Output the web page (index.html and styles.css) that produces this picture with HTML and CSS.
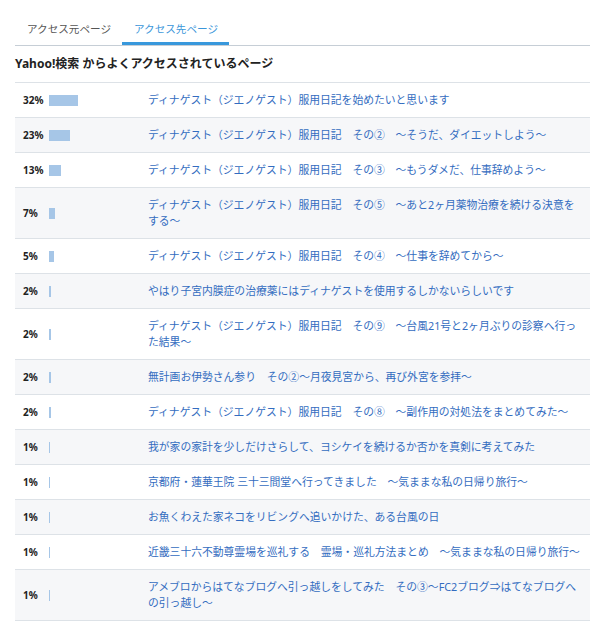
FILE: index.html
```html
<!DOCTYPE html>
<html>
<head>
    <meta charset="utf-8">
    <title>アクセス解析</title>
    <link rel="stylesheet" href="styles.css">
</head>
<body>
    <div class="container">
        <div class="tabs">
            <div class="tab">アクセス元ページ</div>
            <div class="tab active">アクセス先ページ</div>
        </div>

        <h2 class="heading">Yahoo!検索 からよくアクセスされているページ</h2>

        <div class="ranking">
            <div class="row">
                <div class="rate"><span class="pct">32%</span><span class="bar" style="width: 28.8px"></span></div>
                <a class="title" href="#">ディナゲスト（ジエノゲスト）服用日記を始めたいと思います</a>
            </div>
            <div class="row">
                <div class="rate"><span class="pct">23%</span><span class="bar" style="width: 20.7px"></span></div>
                <a class="title" href="#">ディナゲスト（ジエノゲスト）服用日記　その②　～そうだ、ダイエットしよう～</a>
            </div>
            <div class="row">
                <div class="rate"><span class="pct">13%</span><span class="bar" style="width: 11.7px"></span></div>
                <a class="title" href="#">ディナゲスト（ジエノゲスト）服用日記　その③　～もうダメだ、仕事辞めよう～</a>
            </div>
            <div class="row">
                <div class="rate"><span class="pct">7%</span><span class="bar" style="width: 6.3px"></span></div>
                <a class="title" href="#">ディナゲスト（ジエノゲスト）服用日記　その⑤　～あと2ヶ月薬物治療を続ける決意をする～</a>
            </div>
            <div class="row">
                <div class="rate"><span class="pct">5%</span><span class="bar" style="width: 4.5px"></span></div>
                <a class="title" href="#">ディナゲスト（ジエノゲスト）服用日記　その④　～仕事を辞めてから～</a>
            </div>
            <div class="row">
                <div class="rate"><span class="pct">2%</span><span class="bar" style="width: 1.8px"></span></div>
                <a class="title" href="#">やはり子宮内膜症の治療薬にはディナゲストを使用するしかないらしいです</a>
            </div>
            <div class="row">
                <div class="rate"><span class="pct">2%</span><span class="bar" style="width: 1.8px"></span></div>
                <a class="title" href="#">ディナゲスト（ジエノゲスト）服用日記　その⑨　～台風21号と2ヶ月ぶりの診察へ行った結果～</a>
            </div>
            <div class="row">
                <div class="rate"><span class="pct">2%</span><span class="bar" style="width: 1.8px"></span></div>
                <a class="title" href="#">無計画お伊勢さん参り　その②～月夜見宮から、再び外宮を参拝～</a>
            </div>
            <div class="row">
                <div class="rate"><span class="pct">2%</span><span class="bar" style="width: 1.8px"></span></div>
                <a class="title" href="#">ディナゲスト（ジエノゲスト）服用日記　その⑧　～副作用の対処法をまとめてみた～</a>
            </div>
            <div class="row">
                <div class="rate"><span class="pct">1%</span><span class="bar" style="width: 0.9px"></span></div>
                <a class="title" href="#">我が家の家計を少しだけさらして、ヨシケイを続けるか否かを真剣に考えてみた</a>
            </div>
            <div class="row">
                <div class="rate"><span class="pct">1%</span><span class="bar" style="width: 0.9px"></span></div>
                <a class="title" href="#">京都府・蓮華王院 三十三間堂へ行ってきました　～気ままな私の日帰り旅行～</a>
            </div>
            <div class="row">
                <div class="rate"><span class="pct">1%</span><span class="bar" style="width: 0.9px"></span></div>
                <a class="title" href="#">お魚くわえた家ネコをリビングへ追いかけた、ある台風の日</a>
            </div>
            <div class="row">
                <div class="rate"><span class="pct">1%</span><span class="bar" style="width: 0.9px"></span></div>
                <a class="title" href="#">近畿三十六不動尊霊場を巡礼する　霊場・巡礼方法まとめ　～気ままな私の日帰り旅行～</a>
            </div>
            <div class="row">
                <div class="rate"><span class="pct">1%</span><span class="bar" style="width: 0.9px"></span></div>
                <a class="title" href="#">アメブロからはてなブログへ引っ越しをしてみた　その③～FC2ブログ⇒はてなブログへの引っ越し～</a>
            </div>
        </div>
    </div>
</body>
</html>
```

FILE: styles.css
```css
body {
    margin: 0;
    background: #fff;
    font-family: "Noto Sans", "Noto Sans CJK JP", sans-serif;
    color: #333;
}

.container {
    width: 575px;
    margin-left: 15px;
}

.tabs {
    display: flex;
    margin-top: 13px;
    border-bottom: 1px solid #c6ced6;
}

.tab {
    padding: 8px 11px 5px 12px;
    font-size: 10.6px;
    line-height: 16px;
    color: #555;
    border-bottom: 3px solid transparent;
}

.tab.active {
    color: #3a96da;
    border-bottom-color: #3898dc;
}

.heading {
    margin: 9px 0 9px;
    font-size: 12px;
    line-height: 18px;
    font-weight: bold;
    color: #222;
}

.ranking {
    border-top: 1px solid #dde2e7;
}

.row {
    display: flex;
    align-items: center;
    padding: 9px 8px;
    border-bottom: 1px solid #dde2e7;
}

.row:nth-child(even) {
    background: #f6f7f9;
}

.rate {
    flex: none;
    width: 125px;
    display: flex;
    align-items: center;
}

.pct {
    width: 26px;
    font-size: 10px;
    font-weight: bold;
    color: #222;
}

.bar {
    height: 11px;
    background: #a6c6e7;
}

.title {
    flex: 1;
    font-size: 10.8px;
    line-height: 16px;
    color: #336cc0;
    text-decoration: none;
}
```
